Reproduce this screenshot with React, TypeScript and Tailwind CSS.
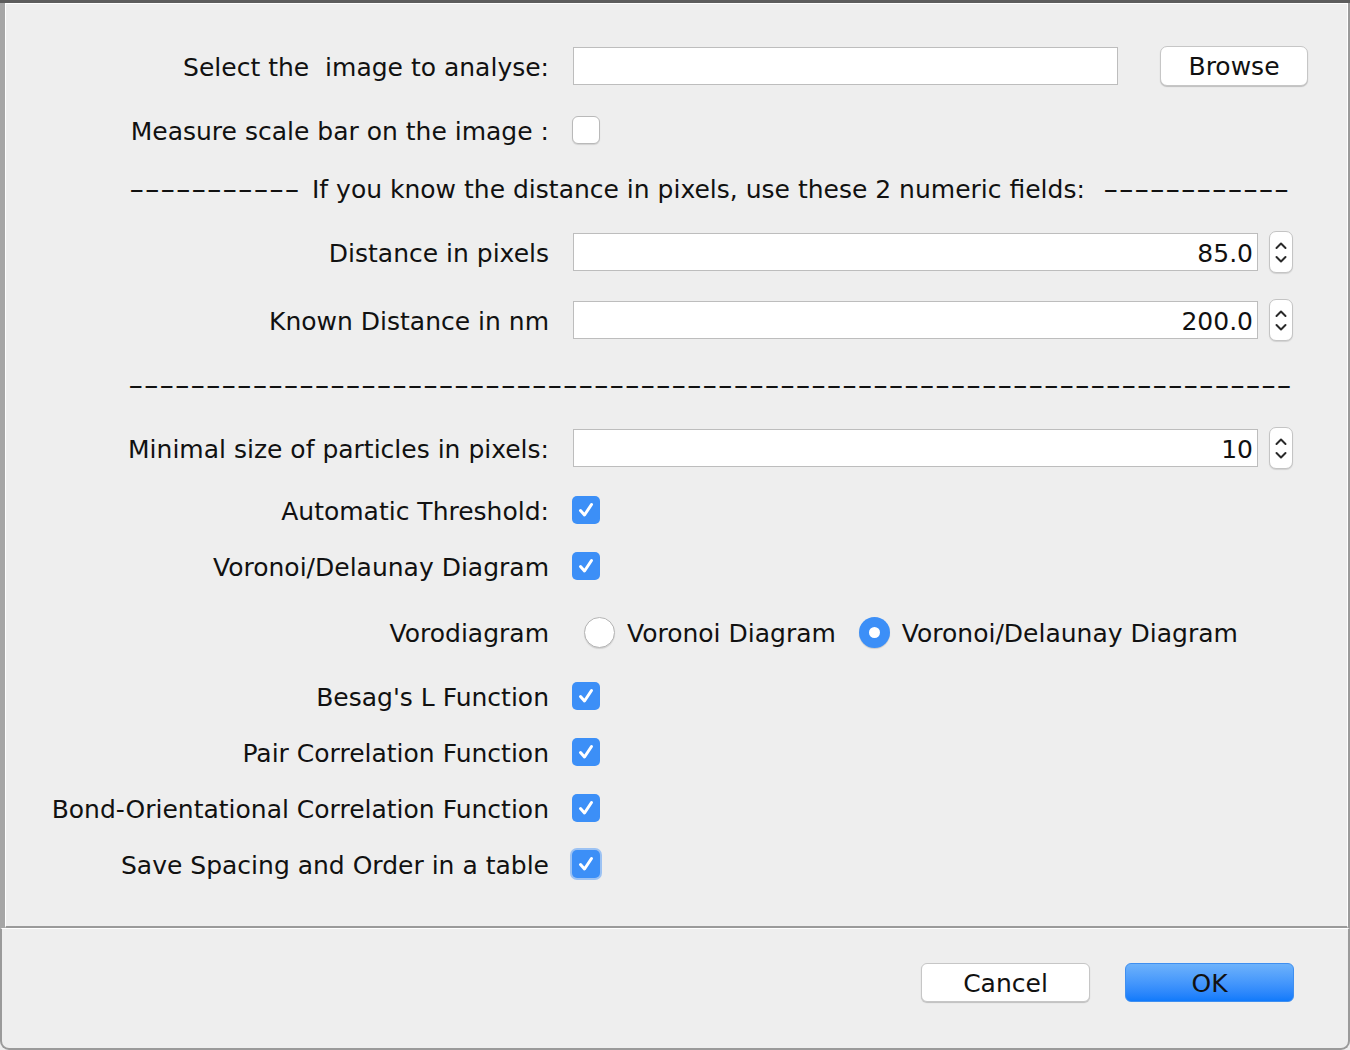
import React from "react";

// Dialog de analyse d'image (clone d'une fenetre Swing sur macOS)

const Dashes = ({ n }: { n: number }) => (
  <span className="inline-block origin-left scale-x-[1.72] whitespace-pre">{"-".repeat(n)}</span>
);

function Check({ checked, focus }: { checked?: boolean; focus?: boolean }) {
  if (!checked) {
    return (
      <div className="w-[28px] h-[28px] rounded-[6px] bg-white border border-[#b9b9b9] shadow-[0_1px_1px_rgba(0,0,0,0.12)]" />
    );
  }
  return (
    <div
      className={
        "w-[28px] h-[28px] rounded-[5px] bg-[#3c8ff7] flex items-center justify-center " +
        (focus ? "ring-2 ring-[#9cc2f3]" : "")
      }
    >
      <svg width="28" height="28" viewBox="0 0 28 28">
        <path d="M8.5 14.5 L12.5 19 L19.5 8.5" fill="none" stroke="#fff" strokeWidth="3" strokeLinecap="round" strokeLinejoin="round" />
      </svg>
    </div>
  );
}

function Radio({ checked }: { checked?: boolean }) {
  if (checked) {
    return (
      <div className="w-[31px] h-[31px] rounded-full bg-[#3c8ff7] flex items-center justify-center shadow-[0_1px_1px_rgba(0,0,0,0.15)]">
        <div className="w-[11px] h-[11px] rounded-full bg-white" />
      </div>
    );
  }
  return <div className="w-[31px] h-[31px] rounded-full bg-white border border-[#b5b5b5] shadow-[0_1px_1px_rgba(0,0,0,0.12)]" />;
}

function Spinner() {
  return (
    <div className="ml-[11px] w-[24px] h-[42px] rounded-[7px] bg-white border border-[#c4c4c4] shadow-[0_1px_1px_rgba(0,0,0,0.12)]">
      <svg width="22" height="40" viewBox="0 0 22 40">
        <path d="M6.5 16 L11 11.5 L15.5 16" fill="none" stroke="#2a2a2a" strokeWidth="2" strokeLinecap="round" strokeLinejoin="round" />
        <path d="M6.5 25 L11 29.5 L15.5 25" fill="none" stroke="#2a2a2a" strokeWidth="2" strokeLinecap="round" strokeLinejoin="round" />
      </svg>
    </div>
  );
}

function NumField({ value }: { value: string }) {
  return (
    <div className="flex items-center">
      <div className="ml-px w-[685px] h-[38px] bg-white border border-[#bdbdbd] flex items-center justify-end pr-[4px] pt-[3px]">
        {value}
      </div>
      <Spinner />
    </div>
  );
}

function Row({ label, mt, children }: { label: string; mt: string; children?: React.ReactNode }) {
  return (
    <div className={"flex items-center h-[40px] " + mt}>
      <div className="w-[543px] text-right whitespace-pre pt-[4px]">{label}</div>
      <div className="ml-[23px] flex items-center">{children}</div>
    </div>
  );
}

export default function App() {
  return (
    <div className="w-[1350px] h-[1050px] bg-[#eeeeee] flex flex-col text-[25px] text-[#111] font-['DejaVu_Sans',sans-serif] overflow-hidden">
      <div className="h-[3px] bg-[#5d5d5d]" />

      {/* panneau principal */}
      <div className="h-[925px] flex flex-col border-l-[5px] border-l-[#a6a6a6] border-r-[2px] border-r-[#9a9a9a]">
        <div className="flex-1 flex flex-col border-t border-l border-white border-r border-r-white border-b-2 border-b-[#9a9a9a]">
          <Row label="Select the  image to analyse:" mt="mt-[42px]">
            <div className="ml-px w-[545px] h-[38px] bg-white border border-[#bdbdbd]" />
            <button className="ml-[42px] w-[148px] h-[40px] bg-white border border-[#c6c6c6] rounded-[7px] shadow-[0_1px_1px_rgba(0,0,0,0.2)] pt-[1px]">
              Browse
            </button>
          </Row>

          <Row label="Measure scale bar on the image :" mt="mt-[24px]">
            <Check />
          </Row>

          <div className="mt-[18px] h-[40px] flex items-center pl-[123px] pt-[4px]">
            <div className="w-[171px]"><Dashes n={11} /></div>
            <div className="ml-[12px] whitespace-pre">If you know the distance in pixels, use these 2 numeric fields:</div>
            <div className="ml-[18px] w-[188px]"><Dashes n={12} /></div>
          </div>

          <Row label="Distance in pixels" mt="mt-[24px]">
            <NumField value="85.0" />
          </Row>

          <Row label="Known Distance in nm" mt="mt-[28px]">
            <NumField value="200.0" />
          </Row>

          <div className="mt-[24px] h-[40px] flex items-center pl-[122px] pt-[4px]">
            <Dashes n={75} />
          </div>

          <Row label="Minimal size of particles in pixels:" mt="mt-[24px]">
            <NumField value="10" />
          </Row>

          <Row label="Automatic Threshold:" mt="mt-[22px]">
            <Check checked />
          </Row>

          <Row label="Voronoi/Delaunay Diagram" mt="mt-[16px]">
            <Check checked />
          </Row>

          <Row label="Vorodiagram" mt="mt-[26px]">
            <div className="ml-[12px] flex items-center">
              <Radio />
              <span className="ml-[12px] pt-[4px]">Voronoi Diagram</span>
              <div className="ml-[23px]"><Radio checked /></div>
              <span className="ml-[12px] pt-[4px]">Voronoi/Delaunay Diagram</span>
            </div>
          </Row>

          <Row label="Besag's L Function" mt="mt-[24px]">
            <Check checked />
          </Row>

          <Row label="Pair Correlation Function" mt="mt-[16px]">
            <Check checked />
          </Row>

          <Row label="Bond-Orientational Correlation Function" mt="mt-[16px]">
            <Check checked />
          </Row>

          <Row label="Save Spacing and Order in a table" mt="mt-[16px]">
            <Check checked focus />
          </Row>
        </div>
      </div>

      {/* pied avec les boutons */}
      <div className="flex-1 border-t border-t-white border-l-2 border-r-2 border-b-2 border-[#9a9a9a] border-t-white rounded-b-[9px] flex justify-end items-start pt-[34px] pr-[54px]">
        <button className="w-[169px] h-[39px] bg-white border border-[#c6c6c6] rounded-[6px] shadow-[0_1px_1px_rgba(0,0,0,0.2)] pt-[1px]">
          Cancel
        </button>
        <button className="ml-[35px] w-[169px] h-[39px] rounded-[6px] border border-[#3f8ff0] bg-gradient-to-b from-[#6db2fb] to-[#0f7afb] pt-[1px]">
          OK
        </button>
      </div>
    </div>
  );
}
